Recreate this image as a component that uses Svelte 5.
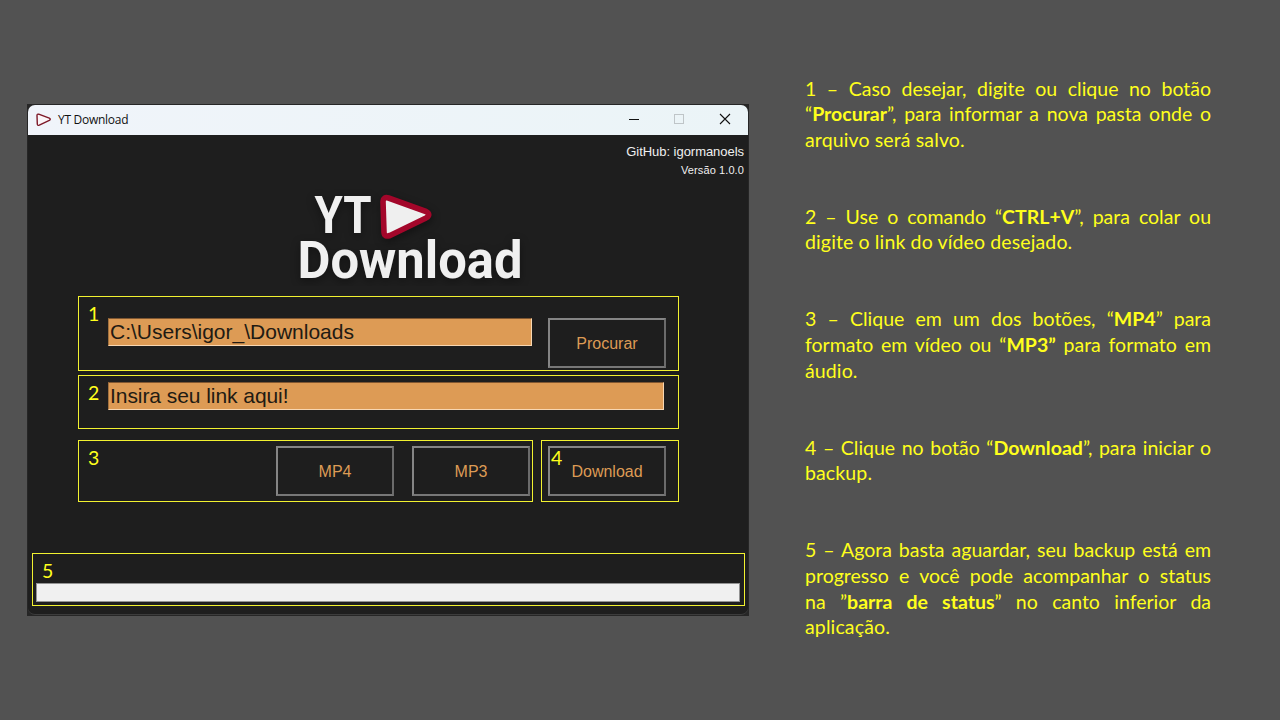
<script>
  const steps = [
    { lines: ['1 – Caso desejar, digite ou clique no botão', '“*Procurar*”, para informar a nova pasta onde o', 'arquivo será salvo.'] },
    { lines: ['2 – Use o comando “*CTRL+V*”, para colar ou', 'digite o link do vídeo desejado.'] },
    { lines: ['3 – Clique em um dos botões, “*MP4*” para', 'formato em vídeo ou “*MP3”* para formato em', 'áudio.'] },
    { lines: ['4 – Clique no botão “*Download*”, para iniciar o', 'backup.'] },
    { lines: ['5 – Agora basta aguardar, seu backup está em', 'progresso e você pode acompanhar o status', 'na ”*barra de status*” no canto inferior da', 'aplicação.'] }
  ];
  let folder = $state('C:\\Users\\igor_\\Downloads');
  let link = $state('Insira seu link aqui!');
</script>

<main class="slide">
  <section class="window">
    <header class="titlebar">
      <svg class="app-icon" width="18" height="16" viewBox="0 0 18 16"><path d="M2 3.4 Q2 1.8 3.7 2.2 L14.3 6.2 Q16.2 7.2 14.3 8.4 L4.3 13.2 Q2.4 13.9 2.3 12Z" fill="#fbf5f8" stroke="#7d1827" stroke-width="1.4" stroke-linejoin="round" /></svg>
      <span class="title">YT Download</span>
      <svg class="controls" width="106" height="14" viewBox="0 0 106 14" fill="none">
        <path d="M1 7.5H11" stroke="#111" />
        <rect x="46.5" y="2.5" width="9" height="9" stroke="#bfc5c8" />
        <path d="M92 2L102 12M102 2L92 12" stroke="#111" stroke-width="1.1" />
      </svg>
    </header>

    <div class="body">
      <div class="credits">
        <div class="github">GitHub: igormanoels</div>
        <div class="version">Versão 1.0.0</div>
      </div>

      <svg class="logo" width="260" height="106" viewBox="0 0 260 106">
        <g class="wordmark">
          <text x="34.5" y="53" textLength="57" lengthAdjust="spacingAndGlyphs">YT</text>
          <text x="17.5" y="97.500" textLength="225" lengthAdjust="spacingAndGlyphs">Download</text>
        </g>
        <path class="mark" d="M103 21.500 Q103.500 16.500 108.500 18 L146 31.500 Q151.500 34.500 146 38 L110 55.500 Q104.500 57.500 104 52.500Z" fill="#efefef" stroke="#a3062a" stroke-width="5.6" stroke-linejoin="round" />
      </svg>

      <div class="form">
        <div class="box folder-box">
          <span class="num">1</span>
          <input class="folder" bind:value={folder} spellcheck="false" />
          <button>Procurar</button>
        </div>
        <div class="box link-box">
          <span class="num">2</span>
          <input class="link" bind:value={link} spellcheck="false" />
        </div>
        <div class="actions">
          <div class="box formats">
            <span class="num">3</span>
            <button>MP4</button>
            <button>MP3</button>
          </div>
          <div class="box start">
            <span class="num over">4</span>
            <button>Download</button>
          </div>
        </div>
      </div>

      <div class="box status">
        <span class="num">5</span>
        <div class="bar"></div>
      </div>
    </div>
  </section>

  <section class="guide">
    {#each steps as step}
      <p>
        {#each step.lines as line, i}
          <span class="line" class:last={i === step.lines.length - 1}>{#each line.split('*') as part, k}{#if k % 2}<b>{part}</b>{:else}{part}{/if}{/each}</span>
        {/each}
      </p>
    {/each}
  </section>
</main>

<style>
  :global(body) { margin: 0; background: #525252; }
  * { box-sizing: border-box; }
  .slide { width: 1280px; height: 720px; overflow: hidden; display: flex; background: #525252; font-family: "Liberation Sans", Arial, sans-serif; }
  .window { width: 722px; height: 512px; margin: 104px 0 0 27px; padding: 1px; background: #262626; display: flex; flex-direction: column; flex: none; }
  .titlebar { height: 30px; background: linear-gradient(90deg, #f0f4fa, #ebf4f7); border-radius: 7px 7px 0 0; display: flex; align-items: center; padding: 0 18px 2px 7px; flex: none; }
  .app-icon { margin-top: 1px; }
  .title { font: 12px "Open Sans", sans-serif; letter-spacing: -0.28px; color: #111; margin-left: 5px; }
  .controls { margin-left: auto; margin-right: -4px; }
  .body { flex: 1; background: #1e1e1e; border-bottom: 1px solid #3c3c3c; border-radius: 0 0 7px 7px; display: flex; flex-direction: column; }
  .credits { height: 45px; padding: 8px 4px 0 0; text-align: right; color: #f0f0f0; }
  .github { font-size: 13px; line-height: 18px; letter-spacing: -0.04px; }
  .version { font-size: 11px; line-height: 18px; letter-spacing: 0.1px; }
  .logo { margin-left: 252px; flex: none; }
  .wordmark { font: bold 51px Roboto, sans-serif; fill: #f0f0f0; filter: drop-shadow(0 3px 5px #0006); }
  .mark { filter: drop-shadow(1px 3px 4px #0006); }
  .form { width: 601px; margin: 10px 0 0 50px; display: flex; flex-direction: column; }
  .box { border: 1px solid #f2f230; display: flex; align-items: flex-start; }
  .num { color: #ffff1c; font: 19.5px/24px Lato, sans-serif; width: 29px; padding-left: 9px; flex: none; }
  .folder-box { height: 75px; padding-top: 21px; }
  .folder-box .num { margin-top: -16px; }
  .link-box { height: 54px; margin-top: 4px; padding-top: 6px; }
  .link-box .num { margin-top: -1px; }
  input { height: 28px; margin: 0; padding: 0 0 0 1px; border: 1px solid #f8d7b2; border-top-color: #805731; border-left-color: #a2723f; background: #dd9b55; color: #211a13; font: 21px "Liberation Sans", Arial, sans-serif; outline: none; border-radius: 0; }
  .folder { width: 424px; }
  .link { width: 556px; letter-spacing: -0.06px; }
  button { width: 118px; height: 50px; padding: 1px 0 0; border: 2px solid; border-color: #858585 #6b6b6b #777 #858585; border-radius: 0; background: #1e1e1e; color: #dd9b55; font: 16px "Liberation Sans", Arial, sans-serif; }
  .folder-box button { margin-left: 16px; }
  .actions { display: flex; justify-content: space-between; margin-top: 11px; }
  .actions .box { height: 62px; padding-top: 5px; }
  .formats { width: 455px; padding-right: 2px; gap: 18px; }
  .formats .num { margin-right: auto; }
  .start { width: 138px; padding-left: 6px; position: relative; }
  .over { position: absolute; left: 0; top: 5px; }
  .status { width: 713px; height: 53px; margin: auto 0 8px 4px; padding: 5px 4px 3px 3px; flex-direction: column; }
  .status .num { padding-left: 6px; }
  .bar { width: 704px; height: 19px; background: #f0f0f0; border: 1px solid #939393; margin-top: auto; }
  .guide { width: 406px; margin: 75.500px 0 0 56px; color: #ffff1c; font: 19.5px/25.650px Lato, sans-serif; }
  p { margin: 0 0 51.300px; }
  .line { display: block; white-space: nowrap; text-align: justify; text-align-last: justify; }
  .last { text-align-last: left; letter-spacing: 0.13px; }
</style>
